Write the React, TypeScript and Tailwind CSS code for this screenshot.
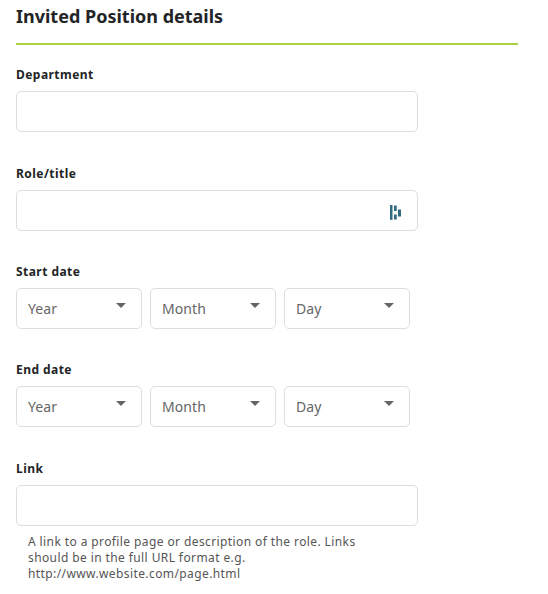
export default function App() {
  const Label = ({ children }: { children: string }) => (
    <label className="block h-[17px] text-[12px] leading-[17px] font-bold tracking-[0.45px] text-[#222426]">{children}</label>
  );
  const Input = ({ children }: { children?: React.ReactNode }) => (
    <div className="mt-2 flex h-[41px] w-[402px] items-center justify-end rounded-[5px] border border-[#dedede] bg-white pr-[15px]">{children}</div>
  );
  const Select = ({ text }: { text: string }) => (
    <div className="relative flex h-[41px] w-[126px] items-center rounded-[5px] border border-[#dedede] bg-white pl-[11px] text-[14px] tracking-[0.1px] text-[#666]">
      <span>{text}</span>
      <span className="absolute right-[15px] top-[14px] h-0 w-0 border-x-[5.5px] border-t-[5px] border-x-transparent border-t-[#666]" />
    </div>
  );
  const Dates = () => (
    <div className="mt-2 flex gap-2">
      <Select text="Year" />
      <Select text="Month" />
      <Select text="Day" />
    </div>
  );
  return (
    <div className="h-[594px] w-[548px] overflow-hidden bg-white pl-4 font-['Noto_Sans',sans-serif]">
      <div className="h-[45px] w-[502px] border-b-2 border-[#aecf42] pt-[4px]">
        <h2 className="text-[18px] leading-[24px] font-bold text-[#222426]">Invited Position details</h2>
      </div>
      <div className="mt-[21px]">
        <Label>Department</Label>
        <Input />
      </div>
      <div className="mt-[33px]">
        <Label>Role/title</Label>
        <Input>
          <svg width="12" height="18" viewBox="0 0 12 18" fill="#2f6c82">
            <rect x="0" y="3" width="2.5" height="14.8" />
            <rect x="4" y="3.5" width="2.7" height="5.5" />
            <rect x="4" y="12.5" width="2.7" height="5" />
            <rect x="8" y="7.5" width="3" height="7" />
          </svg>
        </Input>
      </div>
      <div className="mt-[32px]">
        <Label>Start date</Label>
        <Dates />
      </div>
      <div className="mt-[32px]">
        <Label>End date</Label>
        <Dates />
      </div>
      <div className="mt-[33px]">
        <Label>Link</Label>
        <Input />
        <p className="mt-[8px] w-[350px] pl-3 text-[12px] leading-[16px] tracking-[0.4px] text-[#555]">
          A link to a profile page or description of the role. Links should be in the full URL format e.g. http://www.website.com/page.html
        </p>
      </div>
    </div>
  );
}
